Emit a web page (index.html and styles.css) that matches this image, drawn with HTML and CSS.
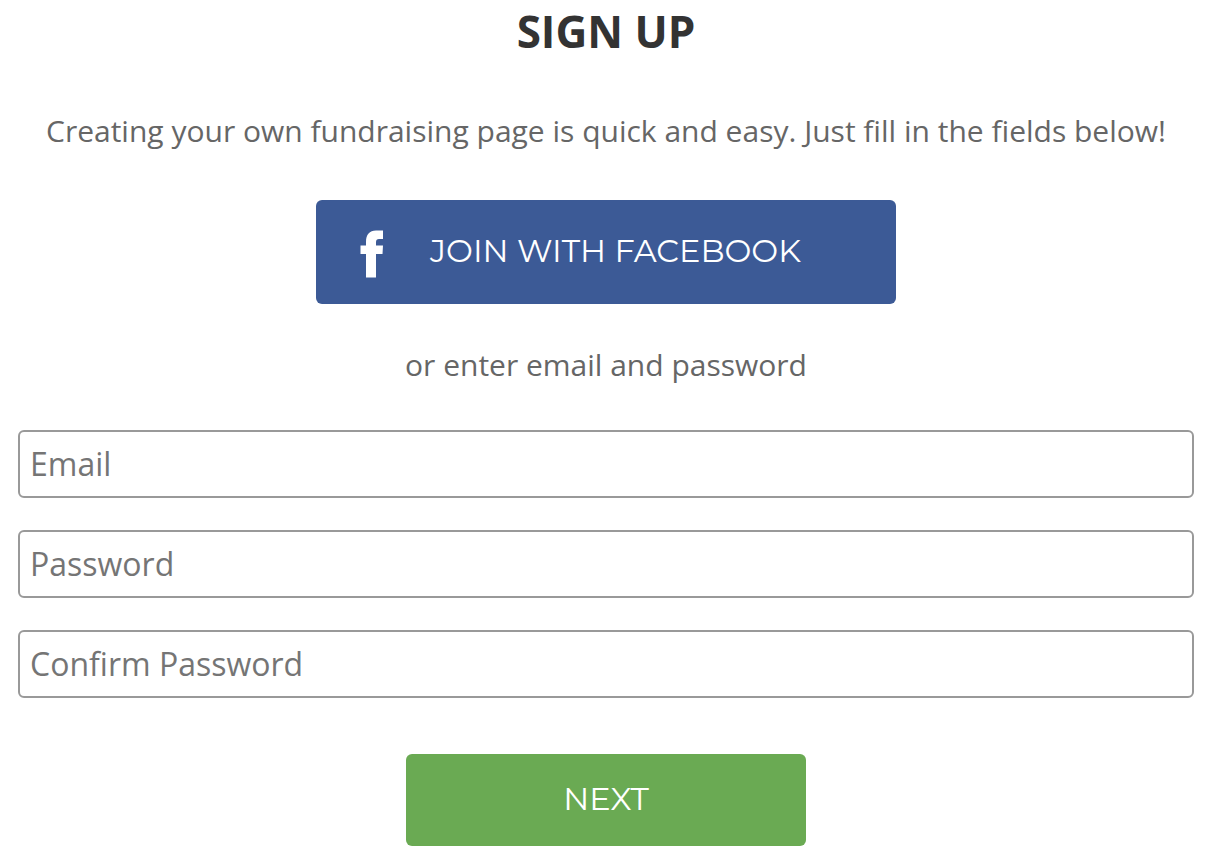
FILE: index.html
```html
<!DOCTYPE html>
<html lang="en">
<head>
    <meta charset="UTF-8">
    <meta name="viewport" content="width=device-width, initial-scale=1.0">
    <title>Sign Up</title>
    <link rel="stylesheet" href="styles.css">
</head>
<body>
    <main class="signup">
        <h1 class="title">SIGN UP</h1>
        <p class="intro">Creating your own fundraising page is quick and easy. Just fill in the fields below!</p>
        <button type="button" class="btn btn-facebook">
            <svg class="fb-icon" viewBox="0 -6 24 54" width="24" height="54" aria-hidden="true">
                <path fill="#fff" d="M6 47.500V24H.5V15.500H6V12C6 4.500 9.500 .5 16 .5H23V9H19C17 9 16 10 16 12V15.500H23L22.500 24H16V47.500Z"/>
            </svg>
            <span>JOIN WITH FACEBOOK</span>
        </button>
        <p class="or">or enter email and password</p>
        <form class="signup-form" method="POST">
            <input type="email" name="email" placeholder="Email" aria-label="Email">
            <input type="password" name="password" placeholder="Password" aria-label="Password">
            <input type="password" name="confirm" placeholder="Confirm Password" aria-label="Confirm Password">
            <button type="submit" class="btn btn-next">NEXT</button>
        </form>
    </main>
</body>
</html>
```
FILE: styles.css
```css
* {
    box-sizing: border-box;
}
body {
    margin: 0;
    background-color: #fff;
    color: #666;
    font-family: "Open Sans", sans-serif;
    font-size: 30px;
    line-height: 40px;
}
.signup {
    display: flex;
    flex-direction: column;
    align-items: center;
    padding: 0 18px 20px;
}
.title {
    margin: 0;
    color: #333;
    font-size: 44px;
    font-weight: 700;
    line-height: 62px;
}
.intro {
    margin: 49px 0;
    text-align: center;
}
.or {
    margin: 41px 0 45px;
}
.btn {
    border: none;
    border-radius: 6px;
    color: #fff;
    cursor: pointer;
    font-family: Montserrat, "Open Sans", sans-serif;
    font-size: 32px;
    line-height: 40px;
}
.btn-facebook {
    display: flex;
    align-items: center;
    gap: 46px;
    width: 100%;
    max-width: 580px;
    padding: 24px 44px 26px;
    background-color: #3c5a96;
}
.signup-form {
    display: flex;
    flex-direction: column;
    align-items: center;
    gap: 32px;
    width: 100%;
}
.signup-form input {
    width: 100%;
    height: 68px;
    padding: 0 10px 2px;
    border: 2px solid #999;
    border-radius: 6px;
    color: #666;
    font-family: inherit;
    font-size: 32px;
}
.signup-form input::placeholder {
    color: #757575;
}
.btn-next {
    width: 100%;
    max-width: 400px;
    margin-top: 24px;
    padding: 25px 20px 27px;
    background-color: #6aaa53;
}
```
